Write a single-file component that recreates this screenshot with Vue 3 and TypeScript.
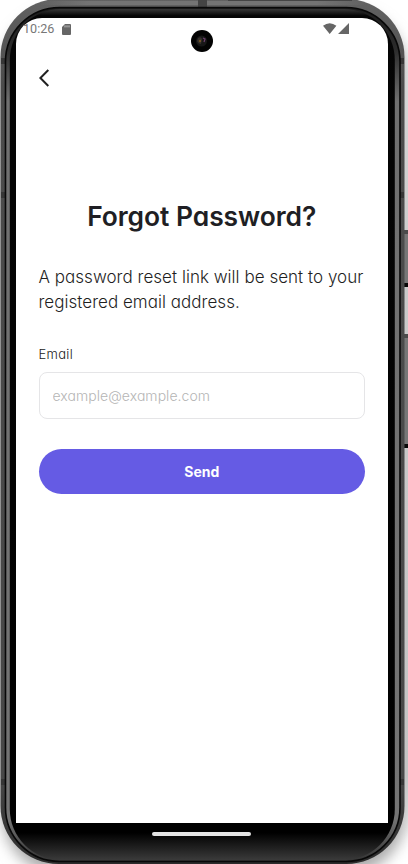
<script setup lang="ts">
import { ref } from 'vue'

const email = ref('')
const sideKeys = [
  { y: 230, height: 57 },
  { y: 334, height: 114 },
]
</script>

<template>
  <div class="stage">
    <svg class="device" viewBox="0 0 408 864" aria-hidden="true">
      <defs>
        <linearGradient id="shade" x1="0" x2="0" y1="0" y2="1">
          <stop offset="0" stop-color="#d8d8d8" stop-opacity="0" />
          <stop offset="0.12" stop-color="#d2d2d2" />
          <stop offset="0.3" stop-color="#cacaca" />
          <stop offset="0.92" stop-color="#c4c4c4" />
          <stop offset="1" stop-color="#d0d0d0" stop-opacity="0" />
        </linearGradient>
        <linearGradient id="glass" x1="0" x2="0" y1="0" y2="1">
          <stop offset="0" stop-color="#383838" />
          <stop offset="0.008" stop-color="#050505" />
          <stop offset="0.968" stop-color="#000" />
          <stop offset="1" stop-color="#3a3a3a" />
        </linearGradient>
        <linearGradient id="rim" x1="0" x2="0" y1="0" y2="1">
          <stop offset="0" stop-color="#626262" />
          <stop offset="0.1" stop-color="#4c4c4c" />
          <stop offset="0.9" stop-color="#484848" />
          <stop offset="1" stop-color="#2c2c2c" />
        </linearGradient>
        <linearGradient id="top" gradientUnits="userSpaceOnUse" x1="40" x2="366" y1="0" y2="0">
          <stop offset="0" stop-color="#747474" stop-opacity="0" />
          <stop offset="0.15" stop-color="#747474" />
          <stop offset="0.85" stop-color="#747474" />
          <stop offset="1" stop-color="#747474" stop-opacity="0" />
        </linearGradient>
        <linearGradient id="edge" x1="0" x2="0" y1="0" y2="1">
          <stop offset="0" stop-color="#1c1c1c" />
          <stop offset="0.05" stop-color="#2c2c2c" />
          <stop offset="0.11" stop-color="#707070" />
          <stop offset="0.95" stop-color="#747474" />
          <stop offset="1" stop-color="#333" />
        </linearGradient>
        <filter id="soft" x="-10%" y="-10%" width="120%" height="120%">
          <feGaussianBlur stdDeviation="7" />
        </filter>
      </defs>
      <rect width="408" height="864" fill="#fff" />
      <rect x="2" y="10" width="404" height="864" rx="60" fill="#aaa" filter="url(#soft)" />
      <rect x="403" y="40" width="5" height="800" fill="url(#shade)" />
      <g v-for="key in sideKeys" :key="key.y">
        <rect x="404" :y="key.y" width="6" :height="key.height" fill="#777" />
        <rect x="404" :y="key.y" width="6" height="4" fill="#4b4b4b" />
        <rect x="404" :y="key.y + key.height - 4" width="6" height="4" fill="#080808" />
      </g>
      <rect x="0.5" y="-1" width="404" height="865" rx="58" fill="url(#rim)" />
      <rect x="40" y="1" width="326" height="4" fill="url(#top)" />
      <path d="M198 0h9v7h-9z" fill="#444" />
      <path d="M1 58h4v6H1zM400 58h4v6h-4zM1 192h4v6H1zM400 192h4v6h-4zM1 779h4v6H1zM400 779h4v6h-4z" fill="#363636" />
      <rect x="5.5" y="7.5" width="394.5" height="854" rx="54" fill="url(#edge)" stroke="#080808" stroke-width="1.6" />
      <rect x="9.8" y="9" width="385" height="851" rx="51" fill="url(#glass)" />
      <path d="M228 0H352" stroke="#454545" stroke-width="2" />
    </svg>

    <main class="screen">
      <header class="status">
        <span class="clock">10:26</span>
        <svg class="card" viewBox="0 0 9 11"><path d="M3 0h5q1 0 1 1v9q0 1-1 1H1q-1 0-1-1V3z" fill="#666" /><path d="M3 1.4v2M5 1.4v2M7 1.4v2" stroke="#ddd" stroke-width=".8" /></svg>
        <svg class="signal" viewBox="0 0 27 12"><path d="M0 2.7Q6.7-2.3 13.4 2.7L6.7 11zM26 0v11H15z" fill="#666" /></svg>
      </header>
      <button class="back" type="button" aria-label="Back">
        <svg viewBox="0 0 11 18"><path d="M9.3 1 1.4 9l7.9 8" fill="none" stroke="#222" stroke-width="2" /></svg>
      </button>
      <h1>Forgot Password?</h1>
      <p class="intro"><span class="line">A password reset link will be sent to your</span><span class="line">registered email address.</span></p>
      <form @submit.prevent>
        <label for="email">Email</label>
        <input id="email" v-model="email" type="email" placeholder="example@example.com" />
        <button class="send" type="submit">Send</button>
      </form>
    </main>

    <svg class="camera" viewBox="0 0 22 22" aria-hidden="true">
      <circle cx="11" cy="11" r="11" fill="#030303" />
      <circle cx="10.5" cy="11" r="5.5" fill="#171717" />
      <path d="M7 8q3-2 4 1l-1 5q-3 0-4-3z" fill="#34302c" />
      <circle cx="9" cy="11" r="1.2" fill="#755323" />
      <path d="M12 8l2 1-1 3" fill="none" stroke="#714170" stroke-width="1.2" />
    </svg>
    <div class="home"></div>
  </div>
</template>

<style>
body { background: #fff; overflow: hidden; }
</style>

<style scoped>
.stage {
  position: relative;
  box-sizing: border-box;
  width: 408px;
  height: 864px;
  padding: 18px 20px 0 16px;
  overflow: hidden;
  font-family: Inter, "Liberation Sans", sans-serif;
  font-feature-settings: "cv11" 1;
}
.device { position: absolute; inset: 0; width: 408px; height: 864px; }
.screen {
  position: relative;
  box-sizing: border-box;
  width: 372px;
  height: 805px;
  padding: 0 23px 0 22.5px;
  overflow: hidden;
  background: #fff;
  border-radius: 26px 26px 0 0;
}
.status {
  display: flex;
  align-items: center;
  height: 22px;
  margin: 0 -8px 0 -15.5px;
}
.clock { width: 39px; font: 12.6px/22px Roboto, sans-serif; color: #777; }
.card { width: 9px; height: 11px; }
.signal { width: 27px; height: 12px; margin: 0 23px 0 auto; }
.back {
  display: flex;
  width: 24px;
  height: 18px;
  margin-top: 29px;
  padding: 0;
  border: 0;
  background: none;
}
.back svg { width: 11px; height: 18px; }
h1 {
  margin: 112px 0 0;
  font-size: 26.4px;
  font-weight: 600;
  line-height: 34px;
  text-align: center;
  white-space: nowrap;
  letter-spacing: -0.05px;
  color: #1f1f24;
}
.intro { margin: 32px 0 0; font-size: 17px; font-weight: 300; line-height: 25px; letter-spacing: 0.03px; color: #1f1f1f; }
.line { display: block; white-space: nowrap; }
form { display: flex; flex-direction: column; margin-top: 30px; }
label { font-size: 13px; font-weight: 300; line-height: 18px; letter-spacing: 0.3px; color: #222; }
input {
  box-sizing: border-box;
  width: 326.5px;
  height: 47px;
  margin: 9px 0 0;
  padding: 0 13px;
  border: 1px solid #e5e5e7;
  border-radius: 8px;
  outline: none;
  background: #fff;
  font: inherit;
  font-size: 14px;
  font-weight: 300;
  letter-spacing: 0.05px;
}
input::placeholder { color: #b5b5b5; opacity: 1; }
.send {
  width: 326.5px;
  height: 45px;
  margin-top: 30px;
  padding: 0;
  border: 0;
  border-radius: 23px;
  background: #655be4;
  color: #fff;
  font: inherit;
  font-size: 14px;
  font-weight: 700;
}
.camera { position: absolute; top: 30px; left: 191px; width: 22px; height: 22px; }
.home { position: absolute; top: 832px; left: 152px; width: 99px; height: 4px; border-radius: 2px; background: #e4e4e4; }
</style>
